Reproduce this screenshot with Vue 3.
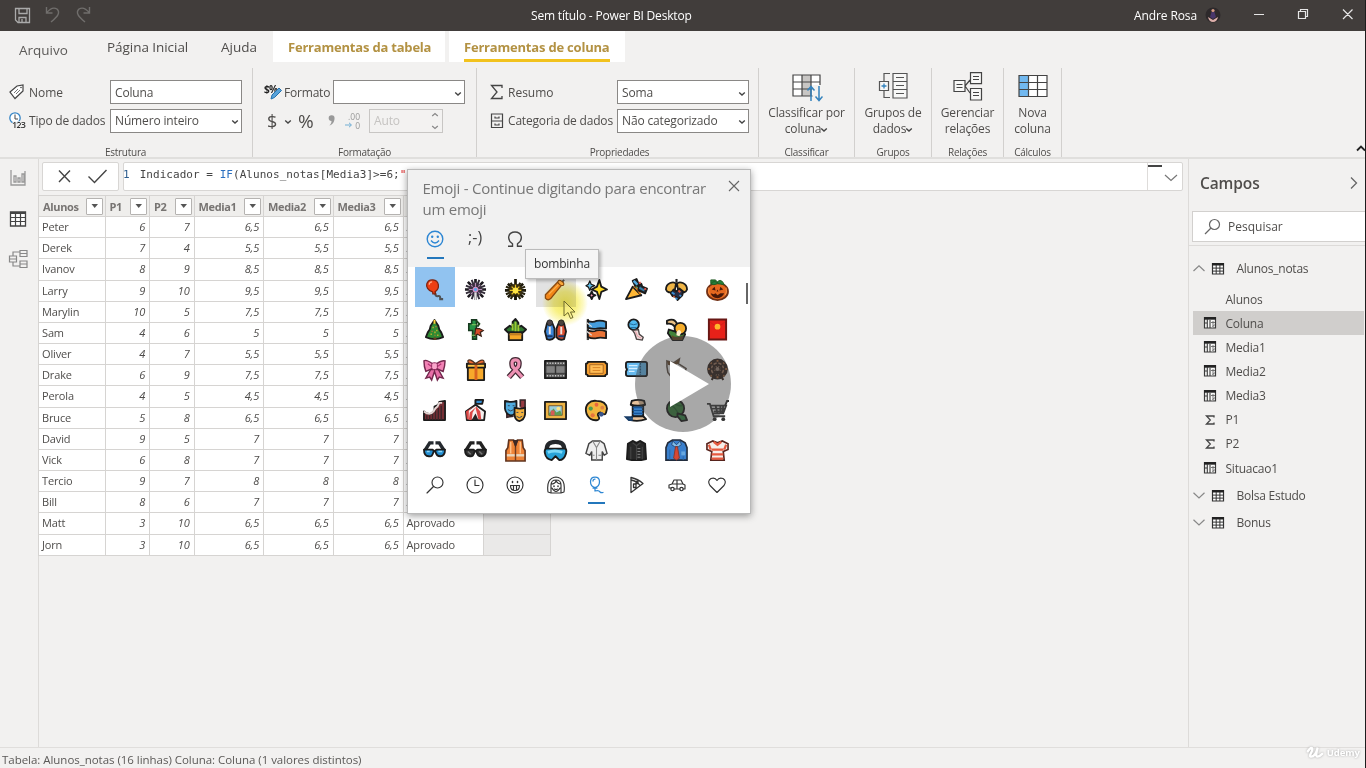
<script setup>
const rows = [
  ['Peter', '6', '7', '6,5'], ['Derek', '7', '4', '5,5'], ['Ivanov', '8', '9', '8,5'], ['Larry', '9', '10', '9,5'],
  ['Marylin', '10', '5', '7,5'], ['Sam', '4', '6', '5'], ['Oliver', '4', '7', '5,5'], ['Drake', '6', '9', '7,5'],
  ['Perola', '4', '5', '4,5'], ['Bruce', '5', '8', '6,5'], ['David', '9', '5', '7'], ['Vick', '6', '8', '7'],
  ['Tercio', '9', '7', '8'], ['Bill', '8', '6', '7'], ['Matt', '3', '10', '6,5'], ['Jorn', '3', '10', '6,5'],
]
const heads = ['Alunos', 'P1', 'P2', 'Media1', 'Media2', 'Media3']

const chev = '<path d="M1.200 1.500l2.800 2.500 2.800-2.500" fill="none" stroke="#444" stroke-width="1.400"/>'
const calc = '<path d="M1.500 1.500h11v10.500h-11z" fill="#f8f8f7" stroke="#3a3a3a" stroke-width="1.200"/><path d="M1 2.400h12" stroke="#222" stroke-width="2.600"/><path d="M4.300 3v9M7 4v8M1.500 7h2.500" stroke="#3a3a3a" stroke-width="1.100"/><path d="M8 6.500h4M10 5v3M9 9h2.500l-2 1.500 2 1" fill="none" stroke="#666" stroke-width=".9"/>'
const grid = '<path d="M1.500 1.500h11v10.500h-11z" fill="#fff" stroke="#333" stroke-width="1.200"/><path d="M1 2.300h12" stroke="#222" stroke-width="2.400"/><path d="M5.200 3v9M8.900 3v9M1.500 6.100h11M1.500 9.100h11" stroke="#333" stroke-width="1"/>'
const sigma = '<path d="M11 4.500V3H3.500L7.300 7l-3.800 4H11V9.500" fill="none" stroke="#444" stroke-width="1.300"/>'
const fields = [
  { t: 'Alunos', i: '' }, { t: 'Coluna', i: calc, sel: true }, { t: 'Media1', i: calc }, { t: 'Media2', i: calc },
  { t: 'Media3', i: calc }, { t: 'P1', i: sigma }, { t: 'P2', i: sigma }, { t: 'Situacao1', i: calc },
]

const K = 'stroke="#1b1b1b" stroke-width="1.900" stroke-linejoin="round" stroke-linecap="round"'
const emojis = [
  // balloon, firework, sparkler, firecracker, sparkles, party popper, confetti ball, pumpkin
  `<path d="M12 14c1 2 0 5 3 5 3-1 3 1 3 3h3" fill="none" stroke="#4f5357" stroke-width="2.200"/><path d="M10 14.500C5 13 3 9 4 6c2-6 11-5 12 1 .5 3-1 6-3.500 7.500l.8 2h-3z" fill="#ee3f14" stroke="#7d2411" stroke-width="1.300"/><path d="M6.500 7c0-2 1.500-3 3-3" fill="none" stroke="#ffb08d" stroke-width="1.300"/>`,
  `<path d="M12 1v22M1 12h22M4 4l16 16M20 4L4 20" stroke="#1d1a20" stroke-width="2.800"/><path d="M8 2l8 20M16 2L8 22M2 8l20 8M2 16l20-8" stroke="#322b38" stroke-width="2"/><circle cx="12" cy="12" r="6.500" fill="#3a3040"/><path d="M12 5v4M5 12h4M15 12h4M7 7l2 2M17 7l-2 2M7 17l2-2M17 17l-2-2" stroke="#b48bb5" stroke-width="1.200"/><circle cx="12" cy="12" r="3" fill="#d58ec6"/><circle cx="12" cy="12" r="1.700" fill="#5da4e6"/><path d="M12 15v8" stroke="#e3e0e3" stroke-width="2.400"/>`,
  `<path d="M12 1v22M1 13h22M4 6l16 14M20 6L4 20" stroke="#1d190a" stroke-width="2.800"/><path d="M7 5l10 17M17 5L7 22M2 9l20 8M2 17l20-8" stroke="#29240f" stroke-width="2.200"/><circle cx="12" cy="13" r="7" fill="#3b3010"/><path d="M12 7v12M6 13h12M8 9l8 8M16 9l-8 8" stroke="#e5bf22" stroke-width="1.300"/><circle cx="12" cy="13" r="3" fill="#ffe645"/><path d="M12 17v6" stroke="#17130a" stroke-width="2.400"/>`,
  `<path d="M18 5l3-3" stroke="#555" stroke-width="2"/><path d="M1.500 17.500L14 4.500q4-2.500 6 1L7 21.500q-3 2.500-5.500-.5z" fill="#f58a1f" stroke="#8c4c14" stroke-width="1.400"/><ellipse cx="17.600" cy="5.200" rx="3.500" ry="2" transform="rotate(35 17.600 5.200)" fill="#ffad45" stroke="#81450d"/><path d="M5 17L15 7" stroke="#ffb866" stroke-width="1.200"/>`,
  `<g ${K}><path d="M15 2l2 7 6 3-6 2.500L15 22l-2.500-7.500L7 12l5.500-3z" fill="#ffda27"/><path d="M5 3l1.500 3.500L10 8 6.500 9.500 5 13 3.500 9.500 1 8l2.500-1.500z" fill="#63bfe9" stroke-width="1.300"/><path d="M7 14l1.300 3L11 18l-2.700 1.300L7 22l-1.300-2.700L3 18l2.700-1z" fill="#f39ebc"/></g>`,
  `<path d="M1 22L8 9l9 9z" fill="#ffb735" ${K}/><path d="M9 9c2 0 6 5 7 8" fill="none" stroke="#d87b1c" stroke-width="2"/><path d="M8 3l4-2 3 7-4 1zM14 8l3-2 1 3 5 2-2 5-7-3z" fill="#273641" ${K}/><path d="M9 3l4 4" stroke="#55aade" stroke-width="2.500"/><path d="M15 10l5 3" stroke="#347da9" stroke-width="2"/><path d="M15 4l1 2M20 12l2-1" stroke="#dd5147" stroke-width="2"/><path d="M11 9l2 1" stroke="#5b8c48" stroke-width="1.500"/>`,
  `<path d="M12 1v4" stroke="#222" stroke-width="2.200"/><path d="M1 12c0-7 8-9 10.500-6L10 14c-5 2-8 1-9-2zM23 12c0-7-8-9-10.500-6L14 14c5 2 8 1 9-2z" fill="#efb546" ${K}/><path d="M9 12l-3 4 2 3 4 1 1 3 5-5 1-4-4-3-3 3z" fill="#282e46" ${K}/><path d="M7 15l3 2M15 18l2 1M11 21l2 1" stroke="#398bd1" stroke-width="2"/><path d="M14 13l2 2M9 20l1-1" stroke="#df5b3f" stroke-width="2"/>`,
  `<ellipse cx="12" cy="14" rx="11" ry="9" fill="#e5671f" stroke="#713015" stroke-width="1.800"/><path d="M5 6q4-4 6-1 4-5 7 0l1 2q-5-1-7-1-4 2-7 0V2h5l3 4" fill="#24803a" stroke="#205923"/><path d="M6 12l3-3 1 4zM14 13l1-4 3 3zM11 14h2l-1-2zM5 16l3 1 2-1 2 2 3-2 4 0q-2 5-7 5-6 0-7-5z" fill="#4a1808"/><path d="M3 10q-1 5 1 8M21 10q1 5-1 8" fill="none" stroke="#f89445"/>`,
  // christmas tree, tanabata, kadomatsu, dolls, carp streamer, wind chime, moon viewing, red envelope
  `<path d="M12 2L8 8l-1 4-2 3-2 5q9 4 18 0l-2-5-2-3-1-4z" fill="#2e8a32" ${K}/><path d="M11 21.500h3" stroke="#69401e" stroke-width="2.500"/><path d="M12 2v4" stroke="#ffd33b" stroke-width="2"/><path d="M10 10h1M14 13h1M8 17h1M15 18h1M12 15h1" stroke="#ffc42f" stroke-width="1.600"/><path d="M9 14h1M12 18h1M13 9h1" stroke="#ed6838" stroke-width="1.300"/>`,
  `<path d="M8 2h5v20H9v-9H5V6h3z" fill="#269345" stroke="#17391f" stroke-width="1.700"/><path d="M12 11h4l4 2-3 2 1 4-4-2-3 2z" fill="#d64b2b" stroke="#392016" stroke-width="1.300"/><path d="M8 7h5M8 18h4" stroke="#8ecc63" stroke-width="1"/><path d="M13 3l3 3-2 3" fill="none" stroke="#204b20" stroke-width="2"/>`,
  `<path d="M1 12l5-4 3 2V4l3-3 3 4v5l3-2 5 4-3 3H4z" fill="#2e7630" ${K}/><path d="M9 6v7m3-9v10m3-7v7" stroke="#9cc933" stroke-width="2"/><path d="M5 15h14v8H5z" fill="#f7a928" ${K}/><path d="M5 17.500h14" stroke="#a86c21"/>`,
  `<path d="M3 6q3-5 6 0l2 5v9q-3 4-8 2l-2-8z" fill="#3c86d8" ${K}/><path d="M15 6q3-5 6 0l2 8-2 8q-5 2-8-2v-9z" fill="#d84d30" ${K}/><circle cx="6" cy="5" r="3" fill="#4a4346" stroke="#222"/><circle cx="18" cy="5" r="3" fill="#4a4346" stroke="#222"/><path d="M6 9v8m12-8v8" stroke="#f1e4df" stroke-width="2"/><path d="M3 19h6m6 0h6" stroke="#193b71" stroke-width="2"/>`,
  `<path d="M3 1v22" stroke="#444" stroke-width="2.400"/><path d="M3 3q5 2 9 0 5-1 10 1v7q-7-1-10 0-4 1-9-1z" fill="#459ddb" ${K}/><path d="M3 13q5 2 9 0 5-1 10 1v7q-7-1-10 0-4 1-9-1z" fill="#e97336" ${K}/><path d="M2 5l5 4M2 14l5 4" stroke="#ddd" stroke-width="1.300"/>`,
  `<circle cx="9" cy="7" r="5.500" fill="#50b9ef" ${K}/><path d="M5 6q4 2 8 0M6 10h6" fill="none" stroke="#246895"/><path d="M8 13l6-1 1 5 4 3-1 3-6-1-2-6z" fill="#efdcda" stroke="#4c4545" stroke-width="1.400"/><path d="M11 14l2 5 4 2" fill="none" stroke="#e896a2"/>`,
  `<path d="M2 3q8-4 11 4l-3 2q-2-4-8-3z" fill="#eac185" ${K}/><path d="M4 12l6 2 6-4 5 7-3 6H8l-5-7z" fill="#43833a" ${K}/><circle cx="16" cy="11" r="6" fill="#f5ad2c" ${K}/><path d="M7 18q6 4 12 0l-1 5H8z" fill="#674923"/><path d="M12 15q3-5 5 0l-2 4-3-1z" fill="#fff1cf"/>`,
  `<path d="M3 1.500h18v21H3z" fill="#e72119" stroke="#671714" stroke-width="2"/><path d="M4 4l8 6 8-6" fill="none" stroke="#d21d17"/><circle cx="12" cy="9" r="3" fill="#ffb62b"/>`,
  // ribbon, gift, reminder ribbon, film, ticket, admission, carousel horse, ferris wheel
  `<path d="M8 12l-5 9 4-1 2 3 3-9 3 9 2-3 4 1-5-9z" fill="#e870a8" stroke="#73284d" stroke-width="1.500"/><path d="M10 6Q3 1 1 3q0 6 2 11l7-3 4 0 7 3q2-6 2-11-3-1-9 3z" fill="#f283b5" stroke="#73284d" stroke-width="1.500"/><path d="M5 6l4 3M19 6l-4 3" stroke="#b43275" stroke-width="1.300"/><rect x="9" y="5" width="6" height="7" rx="2" fill="#f9a7cb" stroke="#8d285b"/>`,
  `<path d="M4 8h17v15H4z" fill="#f7a92b" ${K}/><path d="M3 6h19v4H3z" fill="#ffc84a" ${K}/><path d="M12.500 7v16" stroke="#d96420" stroke-width="3"/><path d="M12 6q-6-6-8-3 0 4 8 3 1 1 9-1 0-6-9 1" fill="#ed6931" stroke="#51311e" stroke-width="1.300"/>`,
  `<path d="M5 20l10-11q2-7-3-7T9 9l10 11" fill="none" stroke="#432a35" stroke-width="6"/><path d="M5 20l10-11q2-7-3-7T9 9l10 11" fill="none" stroke="#ed91b3" stroke-width="3.300"/>`,
  `<path d="M1 3h22v18H1z" fill="#555" ${K}/><path d="M3 5.500h19M3 18.500h19" stroke="#ccc" stroke-width="1.500" stroke-dasharray="1.300 1.500"/><path d="M2 8h20v8H2z" fill="#818181" stroke="#393939"/><path d="M12 7v10" stroke="#333" stroke-width="1.500"/>`,
  `<path d="M3 4h18q0 2 2 2v11q-2 0-2 2H3q0-2-2-2V6q2 0 2-2z" fill="#f59f31" ${K}/><path d="M5 7h14v9H5z" fill="#ffbc55" stroke="#aa6923"/><path d="M8 10h8m-8 3h8" stroke="#d88426"/>`,
  `<path d="M3 4h18q2 0 2 2v11q0 2-2 2H3q-2 0-2-2v-3q2-2 0-4V6q0-2 2-2z" fill="#66b9ed" ${K}/><path d="M16 5v13" stroke="#245a82" stroke-width="1.500" stroke-dasharray="2 1"/><path d="M4 8h9m-9 3h9m-9 3h6" stroke="#d5efff" stroke-width="1.400"/>`,
  `<path d="M2 3l7 2 6-4-1 5 8 5-2 6-4-1-3 5-3-4-4 2-3-4-1-6z" fill="#eee" stroke="#5d5148" stroke-width="1.600"/><path d="M2 3l8 2 5-4-1 5-7 2-4-1z" fill="#64462c"/><path d="M5 9l5 2 5 0 3 4M7 14l4-2 3 5" fill="none" stroke="#fff" stroke-width="3"/>`,
  `<g stroke="#30221c" fill="none"><circle cx="12" cy="11.500" r="9" fill="#9e7760" stroke-width="3.700"/><circle cx="12" cy="11.500" r="4.500" stroke-width="2"/><path d="M12 2v20M2 11.500h20M5 5l14 14M19 5L5 19" stroke-width="1.700"/><path d="M12 12L6 23M12 12l6 11" stroke-width="2.200"/></g><circle cx="12" cy="11.500" r="2" fill="#998274"/><path d="M12 2v2m0 15v2M2 11.500h2m16 0h2M5 5l1 1m12 12l1 1M19 5l-1 1M5 19l1-1" stroke="#a96c42" stroke-width="2"/>`,
  // roller coaster, circus tent, masks, frame, palette, thread, yarn, cart
  `<path d="M1 13q4 4 8 2l3-3V8l4-2 1-3 6-1v20H1z" fill="#762f35" ${K}/><path d="M4 17v5m3-5v5m3-7v7m3-10v10m3-13v13m3-15v15" stroke="#3a2529" stroke-width="1.400"/><path d="M1 13q6 5 10 0 2-4 4-5l2-4h3" fill="none" stroke="#e6d6d4" stroke-width="2"/>`,
  `<path d="M12 6L2 13l1 9h18l1-9z" fill="#f5f0ef" ${K}/><path d="M11 7L5 12v9H3l-1-8M13 8l4 5 1 8h-3l-2-8-1-4-3 5-1 8H5l1-8z" fill="#dc4846"/><path d="M12 15l-4 7h7z" fill="#262323"/><path d="M12 6V1" stroke="#34343d" stroke-width="1.500"/><path d="M12 1h8l-1 4h-7z" fill="#348cd0" ${K}/>`,
  `<path d="M17 8V1h5v11l-4 5M3 14v5l7-1" fill="#963b42" stroke="#37272a" stroke-width="1.700"/><path d="M1 2q7 2 12 0v9q-1 6-6 6-5-1-6-7z" fill="#50acdf" ${K}/><path d="M11 9q6 2 11 0v7q-1 6-6 7-5-1-5-7z" fill="#f2b13e" ${K}/><path d="M4 7h2m3 0h2m-7 4q3 3 6 0M13 14h2m3 0h2m-7 4q3 3 6 0" stroke="#30455a" fill="none"/>`,
  `<path d="M1 3h22v18H1z" fill="#edb445" ${K}/><path d="M5 7h14v10H5z" fill="#9acdda" stroke="#775427"/><path d="M5 15l5-5 3 4 4-2 2 5H5z" fill="#5c9c52"/><circle cx="15" cy="10" r="2" fill="#f9e58c"/><path d="M7 12h4v5H7z" fill="#d65b56"/>`,
  `<path d="M12 2C5 1 0 6 1 13s7 10 12 9q3-1 1-4-2-3 2-4 5 4 6 0l1-4q-1-8-11-8z" fill="#f2b43d" ${K}/><circle cx="6" cy="10" r="2.200" fill="#4d9d4f"/><circle cx="12" cy="6" r="2" fill="#ea663b"/><circle cx="18" cy="9" r="2" fill="#dd8244"/><circle cx="8" cy="17" r="2.200" fill="#e9743c"/><circle cx="17" cy="16" r="2.500" fill="#39548a"/>`,
  `<path d="M8 5h11v14H8z" fill="#3b82c8" ${K}/><path d="M7 2q7-2 13 0l1 4q-8 2-15 0zM8 18h11l3 3q-8 3-16 1z" fill="#e7c29b" ${K}/><path d="M8 9h11m-11 3h11m-11 3h11" stroke="#16569b" stroke-width="1.200"/><path d="M8 19H1l3 3h4" fill="#286094" stroke="#193d67" stroke-width="2"/>`,
  `<circle cx="11" cy="10" r="9" fill="#387d3b" ${K}/><path d="M4 6q7 1 11 12M8 2q4 6 10 5" stroke="#24612f" fill="none" stroke-width="1.400"/><path d="M13 15l8 2 2 5-6 1-4-5z" fill="#358547" ${K}/>`,
  `<path d="M1 5h3l4 13h12M5 7h16l-3 8H8M6 10h14M8 13h10M10 7l2 8m3-8v8m3-8l-1 8" fill="none" stroke="#3b3b3b" stroke-width="1.900"/><path d="M20 7l2-5h2" fill="none" stroke="#333" stroke-width="2"/><circle cx="9" cy="21" r="2" fill="#333"/><circle cx="18" cy="21" r="2" fill="#333"/>`,
  // glasses, sunglasses, safety vest, goggles, lab coat, coat, shirt and tie, striped shirt
  `<path d="M2 12L7 4h4M22 12l-5-8h-4" fill="none" stroke="#252a2f" stroke-width="3.500"/><path d="M1 11h9l2 2 2-2h9q0 7-5 7-4 0-5-5h-2q-1 6-5 5-5 0-5-7z" fill="#238ed1" ${K}/><path d="M4 13h3m9 0h4" stroke="#8dd5f5" stroke-width="1.500"/>`,
  `<path d="M2 12L7 4h4M22 12l-5-8h-4" fill="none" stroke="#222" stroke-width="3.500"/><path d="M1 11h9l2 2 2-2h9q0 7-5 7-4 0-5-5h-2q-1 6-5 5-5 0-5-7z" fill="#333" ${K}/><path d="M4 13l3 3m9-3l3 3" stroke="#777" stroke-width="1.500"/>`,
  `<path d="M5 1h5l2 6 2-6h5l1 8 2 3v11H2V12l2-3z" fill="#ee8438" stroke="#61341e" stroke-width="1.700"/><path d="M3 17h18" stroke="#e9d8bf" stroke-width="2.500"/><path d="M7 3v12m10-12v12" stroke="#ffc28a" stroke-width="1.500"/><path d="M12 8v15" stroke="#733c1e" stroke-width="1.500"/><path d="M9 1l3 8 3-8z" fill="#3e2824"/>`,
  `<path d="M3 12q-1-9 9-9t9 9" fill="none" stroke="#25282c" stroke-width="4.500"/><path d="M2 10h20q2 1 1 5-2 7-7 7l-4-4-4 4q-6-1-7-7-1-3 1-5z" fill="#28a3d9" ${K}/><path d="M4 14q7-3 15 0" stroke="#7bd8f7" stroke-width="3" fill="none"/>`,
  `<path d="M8 2L4 5 1 15l4 2 2-4v9h11v-9l2 4 3-2-3-10-4-3z" fill="#eee" stroke="#444" stroke-width="1.500"/><path d="M8 2l4 7 4-7M12 9v13M8 17h2m4 0h3" fill="none" stroke="#888" stroke-width="1.100"/>`,
  `<path d="M8 2L3 5 2 21l5 1h10l5-1-1-16-5-3-4 2z" fill="#282828" ${K}/><path d="M8 4l4 3 4-3M12 7v15M6 8v13M18 8v13" fill="none" stroke="#444" stroke-width="1.200"/><path d="M13 10h3m-3 3h3m-3 3h3m-3 3h3" stroke="#888"/>`,
  `<path d="M8 1L3 4 1 9v13h22V9l-2-5-5-3z" fill="#397fcd" stroke="#222c3c" stroke-width="1.700"/><path d="M8 2l4 4 4-4 1 4-3 2h-4L7 6z" fill="#82bce8" stroke="#244979"/><path d="M11 8l-2 12 3 2 3-2-2-12z" fill="#d94734" stroke="#8a382e"/><path d="M17 13h4v4h-4z" fill="#68a8df"/><path d="M5 11v11m14-4v4" stroke="#2967a9"/>`,
  `<path d="M7 2L1 5v6l5 2-1 9h14l-1-9 5-2V5l-6-3-5 2z" fill="#f6eee9" stroke="#57231c" stroke-width="1.700"/><path d="M6 11h12M6 16h12M6 20.500h12M3 6l2 5M21 6l-2 5M8 3l4 3 4-3" fill="none" stroke="#e6593f" stroke-width="2.300"/>`,
]
const S = 'fill="none" stroke="#333" stroke-width="1.150" stroke-linejoin="round" stroke-linecap="round"'
const cats = [
  `<g ${S}><circle cx="11.500" cy="6.500" r="5.500"/><path d="M7.500 10.500L1 17"/></g>`,
  `<g ${S}><circle cx="9" cy="9" r="8"/><path d="M9 4v5.500h4"/></g>`,
  `<g ${S}><circle cx="9" cy="9" r="8"/><path d="M4.500 9.500h9q0 5-4.500 5t-4.500-5zM7.500 10v4M10.500 10v4"/><path d="M6.500 5.500v1M11.500 5.500v1" stroke-width="1.500"/></g>`,
  `<g ${S}><path d="M1 16Q-1 2 9 1q10 1 8 15l-3 1H4zM4 17V9q0-5 5-5t5 5v8M4 8q4 0 5-3 2 3 5 3M5 12q4 7 8 0"/><path d="M7 10v.5M11 10v.5" stroke-width="1.500"/><path d="M7.500 13q1.500 1 3 0"/></g>`,
  `<g fill="none" stroke="#2e87d3" stroke-width="1.250" stroke-linejoin="round" stroke-linecap="round"><path d="M8 11.500C2 10 2 1 8 1s6 9 0 10.500zM6 12h4M6 5q0-2 2-2M8 12v3q4-1 5 1 1 1 3 .500"/></g>`,
  `<g ${S}><path d="M4 1.500v15l12-9Q11 3 4 1.500zM4 4q6 1 9 5.500M6.500 8v3.500H9V8zM9 5.500h2v2H9z" stroke-width="1.300"/></g>`,
  `<g ${S} stroke-width="1.300"><path d="M1 12V9l3-1 2-4h7l2 4 2 1v4h-2M1 12h2m3 1h6M4 8h11M9 4v8"/><circle cx="4.500" cy="13" r="1.700"/><circle cx="13.500" cy="13" r="1.700"/></g>`,
  `<g ${S}><path d="M9 16.500L2 9.500Q-1 5 3 2.500q4-1.500 6 2 2-3.500 6-2 4 2.500 1 7z"/></g>`,
]
</script>

<template>
  <div class="app">
    <header class="title">
      <svg class="tools" viewBox="0 0 100 24"><g fill="none" stroke="#aaa" stroke-width="1.300"><path d="M5.500 5.500h14v14H8l-2.500-2.500zM9 5.500v5h8v-5M9 19.500v-5h7v5M12 16v3"/></g><g fill="none" stroke="#706e6c" stroke-width="1.400"><path d="M36.500 5v6h6M36.500 11Q42 4 47 7c4 4 0 8-6 13M79.500 5v6h-6M79.500 11Q74 4 69 7c-4 4 0 8 6 13" transform="translate(0 -1)"/></g></svg>
      <span class="caption">Sem título - Power BI Desktop</span>
      <span class="user">Andre Rosa</span>
      <svg class="avatar" viewBox="0 0 16 16"><circle cx="8" cy="8" r="7.500" fill="#2d292b"/><circle cx="8" cy="3.500" r="1.600" fill="#d79c86"/><path d="M5 10l1.500-5h3L11 10l-3 2z" fill="#48366a"/><path d="M3 10l5 3 5-3q-1 5-5 5t-5-5z" fill="#dcaea9"/></svg>
      <svg class="wc" viewBox="0 0 110 20"><g fill="none" stroke="#e6e6e6" stroke-width="1.200"><path d="M4 9.500h10M48.500 6.500h7v7h-7zM50.500 6.500v-2h7v7h-2M93 4.500l9.500 9.500M102.500 4.500L93 14"/></g></svg>
    </header>

    <nav class="tabs">
      <span class="tab arquivo">Arquivo</span>
      <span class="tab pagina">Página Inicial</span>
      <span class="tab ajuda">Ajuda</span>
      <span class="tab ctx first"><b>Ferramentas da tabela</b></span>
      <span class="tab ctx on"><b>Ferramentas de coluna</b></span>
    </nav>

    <section class="ribbon">
      <div class="group g1">
        <div class="line">
          <svg class="i16" viewBox="0 0 16 16"><path d="M1 8l7-6 6-1v6l-8 7.500z" fill="#fff" stroke="#444" stroke-width="1.200"/><circle cx="12" cy="3.500" r=".8" fill="#444"/><path d="M5 9l4-4M7 10l4-4" stroke="#777"/></svg>
          <label>Nome</label><span class="box">Coluna</span>
        </div>
        <div class="line">
          <svg class="i16 wide" viewBox="0 0 18 17"><circle cx="6" cy="6" r="5.200" fill="#fff" stroke="#3685c5" stroke-width="1.300"/><path d="M6 2.500V7h3" fill="none" stroke="#444"/><text x="3" y="15.500" font-size="9" font-weight="600" fill="#333" stroke="#f3f2f1" stroke-width="1.500" paint-order="stroke" textLength="14">123</text></svg>
          <label class="tipo">Tipo de dados</label><span class="box">Número inteiro<svg viewBox="0 0 8 6" v-html="chev" /></span>
        </div>
        <small>Estrutura</small>
      </div>
      <div class="group g2">
        <div class="line">
          <svg class="i16 wide" viewBox="0 0 18 17"><text x="0" y="9" font-size="10" font-weight="700" fill="#222" textLength="14">$%</text><path d="M7 15l1-4 7-7 2.500 2.500-7 7z" fill="#58a3da" stroke="#2471ad"/></svg>
          <label class="tipo">Formato</label><span class="box"><svg viewBox="0 0 8 6" v-html="chev" /></span>
        </div>
        <div class="line fmt">
          <span class="dollar">$</span><svg class="cv" viewBox="0 0 8 6" v-html="chev" />
          <span class="pct">%</span>
          <svg class="comma" viewBox="0 0 8 14"><path d="M4 1a3 3 0 0 1 3.500 3c0 5-3 8-6 8.500 2-1.500 2.500-3 2.500-5a3.200 3.200 0 0 1 0-6.500z" fill="#999"/></svg>
          <span class="dec"><span>.00</span><span><svg viewBox="0 0 8 6"><path d="M0 3h6M4 .8L6.500 3 4 5.200" fill="none" stroke="#73afd4"/></svg>0</span></span>
          <span class="box auto">Auto<svg viewBox="0 0 8 18"><path d="M1.200 4l2.800-2.500L6.800 4M1.200 14l2.800 2.500L6.800 14" fill="none" stroke="#888" stroke-width="1.200"/></svg></span>
        </div>
        <small>Formatação</small>
      </div>
      <div class="group g3">
        <div class="line">
          <svg class="i16" viewBox="0 0 16 16"><path d="M12 4V1.500H1.500L7 8l-5.500 6.500H12V12" fill="none" stroke="#444" stroke-width="1.300"/></svg>
          <label>Resumo</label><span class="box">Soma<svg viewBox="0 0 8 6" v-html="chev" /></span>
        </div>
        <div class="line">
          <svg class="i16" viewBox="0 0 16 16"><path d="M1.500 1h11v13.500h-11zM1.500 8h11M5 3.500V5h4V3.500M5 10.500V12h4v-1.500" fill="none" stroke="#444" stroke-width="1.200"/></svg>
          <label class="cat">Categoria de dados</label><span class="box">Não categorizado<svg viewBox="0 0 8 6" v-html="chev" /></span>
        </div>
        <small>Propriedades</small>
      </div>
      <div class="group big g4">
        <svg class="i32" viewBox="0 0 32 30"><path d="M2 3h27v21H2z" fill="#fff"/><path d="M11 3h9v21h-9z" fill="#c8c6c4"/><path d="M2 3h27v21H2zM2 10h27M2 17h27M11 3v21M20 3v21" fill="none" stroke="#444" stroke-width="1.200"/><path d="M21.500 13h10v16h-10z" fill="#f3f2f1"/><path d="M20 29V15M16.500 18.500L20 14.500l3.500 4M28 14v14M24.500 24.500l3.500 4 3.500-4" fill="none" stroke="#3583bd" stroke-width="1.500"/></svg>
        <span>Classificar por</span><span>coluna<svg viewBox="0 0 8 6" v-html="chev" /></span><small>Classificar</small>
      </div>
      <div class="group big g5">
        <svg class="i32" viewBox="0 0 32 30"><g fill="#f8f8f7" stroke="#555" stroke-width="1.200"><path d="M16 1.500h14v24.500H16zM16 9.500h14M16 17.500h14M19 5.500h8M19 13.500h8M19 21.500h8M2.500 9.500h9v9h-9z"/><path d="M7 9V1.500h6M7 19v6.500h6" fill="none"/></g><path d="M4.500 14h5M7 11.500v5" stroke="#3181bd" stroke-width="1.300"/></svg>
        <span>Grupos de</span><span>dados<svg viewBox="0 0 8 6" v-html="chev" /></span><small>Grupos</small>
      </div>
      <div class="group big g6">
        <svg class="i32" viewBox="0 0 32 30"><g fill="#f8f8f7" stroke="#444" stroke-width="1.200"><path d="M2 8.500h11v11H2zM18.500.6h11v11h-11zM18.500 16.500h11V28h-11zM4.500 12.500h6M4.500 15.500h6M21 4.500h6M21 7.500h6M21 20.500h6M21 23.500h6M13 14l5-6M13 14l5 7"/></g></svg>
        <span>Gerenciar</span><span>relações</span><small>Relações</small>
      </div>
      <div class="group big g7">
        <svg class="i32" viewBox="0 0 32 30"><path d="M2 3.500h28v21H2z" fill="#fff"/><path d="M2 3.500h9.500v21H2z" fill="#71b8ef"/><path d="M2 3.500h28v21H2zM2 10.500h28M2 17.500h28M11.500 3.500v21M20.500 3.500v21" fill="none" stroke="#444" stroke-width="1.200"/></svg>
        <span>Nova</span><span>coluna</span><small>Cálculos</small>
      </div>
      <svg class="collapse" viewBox="0 0 10 7"><path d="M1 5.500l4-4 4 4" fill="none" stroke="#222" stroke-width="1.800"/></svg>
    </section>

    <main>
      <aside class="rail">
        <svg viewBox="0 0 20 20"><path d="M3 2v15h14V3M6 8h2v6H6zM10 10h2v4h-2zM14 6h2v8h-2z" fill="none" stroke="#999" stroke-width="1.300"/></svg>
        <svg viewBox="0 0 20 20"><path d="M2.500 3h15v14h-15z" fill="#fff" stroke="#444" stroke-width="1.300"/><path d="M2 4h16" stroke="#444" stroke-width="2"/><path d="M2.500 8.500h15M2.500 12.500h15M7.500 5v12M12.500 5v12" stroke="#444" stroke-width="1.200"/></svg>
        <svg viewBox="0 0 20 20"><path d="M1.500 7h7v6h-7zM1.500 10h7M12 1.500h7v6h-7zM12 4.500h7M12 12h7v6.500h-7zM12 15h7M5 7V3h7M5 13v4h7" fill="none" stroke="#888" stroke-width="1.200"/></svg>
      </aside>

      <section class="work">
        <div class="formula">
          <div class="actions"><svg viewBox="0 0 76 28"><g fill="none" stroke="#444" stroke-width="1.400"><path d="M16 7.500L27 19M27 7.500L16 19M45.500 13.500l6 6L63.500 7" /></g></svg></div>
          <div class="code"><pre><i>1</i>Indicador = <em>IF</em>(Alunos_notas[Media3]&gt;=6;<b>"</b></pre><div class="drop"><svg viewBox="0 0 14 8"><path d="M1 1l6 5.500L13 1" fill="none" stroke="#777" stroke-width="1.200"/></svg></div></div>
        </div>
        <div class="table">
          <div class="tr th">
            <div v-for="h in heads" :key="h" class="td"><span>{{ h }}</span><button><svg viewBox="0 0 8 5"><path d="M1 0h6.500L4.200 4z" fill="#555" /></svg></button></div>
            <div class="td" /><div class="td" />
          </div>
          <div v-for="r in rows" :key="r[0]" class="tr">
            <div class="td name">{{ r[0] }}</div>
            <div class="td num">{{ r[1] }}</div>
            <div class="td num">{{ r[2] }}</div>
            <div v-for="n in 3" :key="n" class="td num">{{ r[3] }}</div>
            <div class="td name">Aprovado</div>
            <div class="td empty" />
          </div>
        </div>
      </section>

      <aside class="fields">
        <div class="fhead"><strong>Campos</strong><svg viewBox="0 0 8 14"><path d="M1 1.500L6.500 7 1 12.500" fill="none" stroke="#666" stroke-width="1.300"/></svg></div>
        <div class="search"><svg viewBox="0 0 18 18"><circle cx="10.500" cy="6.500" r="5" fill="none" stroke="#666" stroke-width="1.200"/><path d="M7 10l-6 6" stroke="#666" stroke-width="1.200"/></svg>Pesquisar</div>
        <div class="tree">
          <div class="node top"><svg class="tw" viewBox="0 0 12 7"><path d="M.5 6L6 .8 11.500 6" fill="none" stroke="#888" stroke-width="1.200"/></svg><svg class="ti" viewBox="0 0 14 14" v-html="grid" /><span>Alunos_notas</span></div>
          <div v-for="f in fields" :key="f.t" class="leaf" :class="{ sel: f.sel }"><svg class="ti" viewBox="0 0 14 14" v-html="f.i" />{{ f.t }}</div>
          <div class="more">
            <div v-for="t in ['Bolsa Estudo', 'Bonus']" :key="t" class="node"><svg class="tw" viewBox="0 0 12 7"><path d="M.5 .8L6 6 11.500 .8" fill="none" stroke="#888" stroke-width="1.200"/></svg><svg class="ti" viewBox="0 0 14 14" v-html="grid" /><span>{{ t }}</span></div>
          </div>
        </div>
      </aside>
    </main>

    <footer><span>Tabela: Alunos_notas (16 linhas) Coluna: Coluna (1 valores distintos)</span>
      <div class="brand"><svg viewBox="0 0 20 16"><path d="M2 6c3-4 5-5 5-2S2 12 6 12s6-6 7-10c-1 4-3 10 0 10 2 0 4-2 5-3" fill="none" stroke="#fff" stroke-width="2.600" stroke-linecap="round"/></svg>Udemy</div>
    </footer>

    <div class="picker">
      <div class="ptop">
        <p>Emoji - Continue digitando para encontrar um emoji</p>
        <svg class="close" viewBox="0 0 12 12"><path d="M1 1l10 10M11 1L1 11" stroke="#666" stroke-width="1.100"/></svg>
        <div class="modes">
          <span class="on"><svg viewBox="0 0 18 18"><g fill="none" stroke="#2d86d3" stroke-width="1.400"><circle cx="9" cy="9" r="7.800"/><path d="M5 10.500q4 5 8 0"/></g><circle cx="6.200" cy="6.800" r="1.200" fill="#2d86d3"/><circle cx="11.800" cy="6.800" r="1.200" fill="#2d86d3"/></svg></span>
          <span>;-)</span><span><svg viewBox="0 0 18 18"><path d="M2 16.300h4.500v-2.500C0 9 2.500 2 9 2s9 7 2.500 11.800v2.500H16" fill="none" stroke="#444" stroke-width="1.400"/></svg></span>
        </div>
      </div>
      <div class="emojis"><span v-for="(e, i) in emojis" :key="i" :class="{ picked: i === 0, hover: i === 3 }"><svg viewBox="0 0 24 24" v-html="e" /></span></div>
      <div class="cats"><span v-for="(c, i) in cats" :key="i" :class="{ on: i === 4 }"><svg viewBox="0 0 18 18" v-html="c" /></span></div>
      <i class="scroll" />
    </div>
    <div class="halo" />
    <div class="tip">bombinha</div>
    <svg class="cursor" viewBox="0 0 13 20"><path d="M1 1v15l4-3.500 2.500 6 2.500-1-2.500-5.500H12z" fill="#f9ef8e" fill-opacity=".6" stroke="#6d682c" stroke-width="1"/></svg>
    <div class="play"><svg viewBox="0 0 96 96"><path d="M35 25l39 23-39 23z" fill="#fff"/></svg></div>
  </div>
</template>

<style>
html, body { margin: 0; overflow: hidden; background: #f3f2f1; }
</style>

<style scoped>
* { box-sizing: border-box; }
.app { position: relative; width: 1366px; height: 768px; overflow: hidden; display: flex; flex-direction: column; background: #f2f1f0; border-right: 1px solid #1d1d1d; font: 12px "Open Sans", "Noto Sans", sans-serif; color: #4f4d4b; white-space: nowrap; }
svg { display: block; flex: none; }
.title { height: 31px; flex: none; background: #413d3b; color: #fff; display: flex; align-items: center; padding-bottom: 1px; }
.tools { width: 100px; height: 24px; margin-left: 9.500px; }
.caption { margin-left: 421.500px; width: 603px; letter-spacing: -.18px; }
.user { width: 71px; letter-spacing: -.1px; }
.avatar { width: 16px; height: 16px; }
.wc { width: 110px; height: 20px; margin-left: 29px; }
.tabs { height: 32px; flex: none; display: flex; font-size: 13.500px; line-height: 33px; }
.tab { height: 31px; flex: none; }
.arquivo { padding-left: 19px; width: 107px; line-height: 39px; color: #5c5a58; }
.pagina { width: 114px; letter-spacing: -.05px; }
.ajuda { width: 52px; letter-spacing: 0; }
.ctx { background: #fff; padding-left: 15px; width: 172px; color: #b39243; font-size: 13px; }
.ctx b { font-weight: 700; letter-spacing: -.2px; display: inline-block; height: 31px; }
.ctx.on { margin-left: 4px; width: 176px; }
.ctx.on b { border-bottom: 3px solid #f2c21d; }

.ribbon { height: 96px; flex: none; display: flex; position: relative; border-bottom: 2px solid #e0dfdd; padding-top: 5px; }
.group { height: 89px; flex: none; border-right: 1px solid #d2d0ce; position: relative; padding-top: 12px; display: flex; flex-direction: column; gap: 4px; }
.group small { font-size: 10px; line-height: 12px; text-align: center; margin-top: auto; letter-spacing: -.25px; margin-bottom: -1px; }
.g1 { width: 253px; padding-left: 9px; padding-right: 10px; }
.g2 { width: 224px; padding-left: 11px; padding-right: 11px; }
.g3 { width: 282px; padding-left: 13px; padding-right: 9px; }
.g4 { width: 96px; } .g5 { width: 77px; } .g6 { width: 72px; } .g7 { width: 58px; }
.line { height: 24.500px; display: flex; align-items: center; }
.i16 { width: 16px; height: 16px; margin-right: 4px; }
.wide { width: 18px; height: 17px; margin-right: 2px; overflow: visible; }
.tipo { letter-spacing: -.2px; }
.cat { letter-spacing: -.18px; }
.g3 .i16 { margin-right: 2px; }
.box { margin-left: auto; width: 132px; height: 24px; border: 1px solid #8a8886; background: #fff; padding: 0 5px 0 4px; display: flex; align-items: center; justify-content: space-between; letter-spacing: -.15px; }
.box svg { width: 8px; height: 6px; margin-left: auto; margin-right: -3px; margin-top: 3px; }
.fmt { padding-left: 3px; }
.dollar { font-size: 18px; width: 17px; }
.cv { width: 8px; height: 6px; margin-right: 6px; margin-top: 3px; }
.pct { font-size: 19px; width: 30px; letter-spacing: -.5px; }
.comma { width: 7px; height: 13px; margin-right: 8px; }
.dec { width: 17px; display: flex; flex-direction: column; align-items: flex-end; font-size: 8.500px; line-height: 9px; color: #999; }
.dec span { display: flex; align-items: center; gap: 2px; }
.dec svg { width: 8px; height: 6px; }
.box.auto { width: 74px; margin: 0 0 0 9px; background: #f3f2f1; border-color: #c8c6c4; color: #c5c3c1; }
.box.auto svg { height: 18px; margin-top: 0; margin-right: -2px; }
.big { align-items: center; gap: 0; padding-top: 4px; }
.big > span { line-height: 16px; letter-spacing: -.15px; display: flex; align-items: center; }
.big > span svg { width: 8px; height: 6px; margin: 2px 0 0 -1px; }
.i32 { width: 32px; height: 30px; margin-bottom: 3px; }
.collapse { position: absolute; right: -1px; bottom: 5px; width: 10px; height: 7px; }

main { flex: 1; min-height: 0; display: flex; }
.rail { width: 39px; flex: none; border-right: 1px solid #dddbd9; padding: 9px 0 0 8px; }
.rail svg { width: 20px; height: 20px; margin-bottom: 20.500px; }
.work { flex: 1; padding-top: 3px; margin-left: -1px; }
.formula { display: flex; height: 29px; gap: 4px; padding: 0 5px 0 4px; }
.actions { width: 77px; border: 1px solid #d8d6d4; border-radius: 2px; background: #fff; }
.actions svg { width: 76px; height: 28px; }
.code { flex: 1; border: 1px solid #d8d6d4; border-radius: 2px; background: #fff; display: flex; justify-content: space-between; }
pre { margin: 0 0 0 -1px; font: 11px/24px "DejaVu Sans Mono", monospace; letter-spacing: .045px; color: #444; }
pre i { font-style: normal; color: #2e5d8d; margin-right: 10px; }
pre em { font-style: normal; color: #2a6fc0; }
pre b { font-weight: 400; color: #d22; }
.drop { width: 35px; border-left: 1px solid #dedcda; position: relative; padding: 11px 0 0 16px; }
.drop::before { content: ""; position: absolute; left: 0; top: 2px; width: 14px; height: 2px; background: #444; }
.drop svg { width: 14px; height: 8px; }
.table { margin-top: 4px; width: 513px; border-left: 1px solid #d6d4d2; border-top: 1px solid #d6d4d2; }
.tr { height: 21.170px; display: grid; grid-template-columns: 66.500px 44.500px 44.500px 69.500px 69.500px 70px 80.500px 67px; }
.td { border-right: 1px solid #d6d4d2; border-bottom: 1px solid #d6d4d2; background: #fff; line-height: 19px; padding: 0 4px; font-size: 11px; }
.name { letter-spacing: -.15px; padding-left: 3px; }
.num { text-align: right; font-style: italic; letter-spacing: -.2px; }
.th .td { background: #efeeec; font-weight: 700; font-size: 11px; color: #777472; display: flex; align-items: center; justify-content: space-between; padding: 0 2px 0 4px; letter-spacing: -.35px; }
.td.empty { background: #eae9e8; }
button { width: 17px; height: 17px; border: 1px solid #b5b3b1; background: #fff; padding: 5px 3px; margin: 0; border-radius: 1px; }
button svg { width: 9px; height: 5px; }

.fields { width: 177px; flex: none; border-left: 1px solid #dddbd9; }
.fhead { height: 52px; padding: 0 7px 4px 11px; display: flex; align-items: center; justify-content: space-between; }
.fhead strong { font-size: 15.500px; font-weight: 600; letter-spacing: -.1px; }
.fhead svg { width: 8px; height: 14px; }
.search { height: 31px; margin-left: 3px; border: 1px solid #d2d0ce; border-right: 0; background: #fff; display: flex; align-items: center; padding-left: 11px; }
.search svg { width: 18px; height: 18px; margin-right: 6px; }
.tree { border-top: 1px solid #dddbd9; margin-top: 3px; padding-top: 8px; }
.node { height: 27px; display: flex; align-items: center; padding-left: 4px; letter-spacing: -.25px; }
.node.top { height: 29px; margin-bottom: 4px; }
.more { padding-top: 2px; }
.tw { width: 12px; height: 7px; margin-right: 6px; }
.ti { width: 14px; height: 14px; margin-right: 11.500px; }
.leaf { height: 24.150px; margin: 0 1px 0 4px; padding-left: 10px; display: flex; align-items: center; letter-spacing: -.22px; }
.leaf .ti { margin-right: 8.500px; }
.sel { background: #d0cecc; }

footer { height: 21px; flex: none; border-top: 1px solid #e0dedc; padding: 3px 2px 0; line-height: 17px; font-size: 11.500px; letter-spacing: -.035px; color: #5b5957; position: relative; }
.brand { position: absolute; right: 5px; top: -4px; display: flex; align-items: center; gap: 3px; color: #fff; font-weight: 700; font-size: 9.500px; filter: drop-shadow(0 0 1px #aaa); }
.brand svg { width: 18px; height: 16px; }

.picker { position: absolute; left: 406.500px; top: 169px; width: 344px; height: 345px; border: 1px solid #b9b9b9; background: #fff; box-shadow: 0 2px 7px rgba(0,0,0,.38); color: #777; }
.ptop { background: #f1f1f1; height: 97px; padding: 8px 0 0 15px; position: relative; }
p { margin: 0; font-size: 15px; line-height: 20.500px; width: 298px; white-space: normal; letter-spacing: -.25px; }
.close { position: absolute; right: 10px; top: 10px; width: 12px; height: 12px; }
.modes { display: flex; margin-left: -8px; margin-top: 8px; }
.modes span { width: 40.400px; height: 32px; display: flex; justify-content: center; align-items: flex-start; padding-top: 3px; font-size: 16px; line-height: 15px; color: #444; position: relative; }
.modes svg { width: 18px; height: 18px; }
.modes .on::after, .cats .on::after { content: ""; position: absolute; left: 12px; bottom: 0; width: 17px; height: 2px; background: #2377bc; }
.emojis { display: grid; grid-template-columns: repeat(8, 40.350px); grid-auto-rows: 40.300px; padding-left: 7px; }
.emojis span { display: grid; place-items: center; padding-top: 4px; }
.emojis span svg { width: 23px; height: 23px; overflow: visible; }
.emojis .picked { background: #91c3f0; }
.emojis .hover { background: #e2e2e2; }
.cats { display: flex; padding-left: 7px; }
.cats span { width: 40.350px; height: 36px; display: flex; justify-content: center; padding-top: 7.500px; position: relative; }
.cats svg { width: 18px; height: 18px; }
.scroll { position: absolute; left: 338px; top: 113px; width: 2px; height: 21px; background: #666; }
.halo { position: absolute; left: 542px; top: 280px; width: 46px; height: 46px; border-radius: 50%; background: radial-gradient(circle closest-side, rgba(240,228,60,.85) 0, rgba(246,236,90,.75) 50%, rgba(250,242,130,.5) 78%, rgba(255,250,180,0)); mix-blend-mode: multiply; }
.tip { position: absolute; left: 525px; top: 249px; width: 74px; height: 30px; line-height: 28px; text-align: center; background: #f5f5f5; border: 1px solid #bbb; box-shadow: 2px 2px 3px rgba(0,0,0,.25); font-size: 12px; letter-spacing: -.2px; color: #333; }
.cursor { position: absolute; left: 563px; top: 300px; width: 13px; height: 20px; }
.play { position: absolute; left: 635px; top: 336px; width: 96px; height: 96px; border-radius: 50%; background: rgba(65,65,65,.46); }
</style>
